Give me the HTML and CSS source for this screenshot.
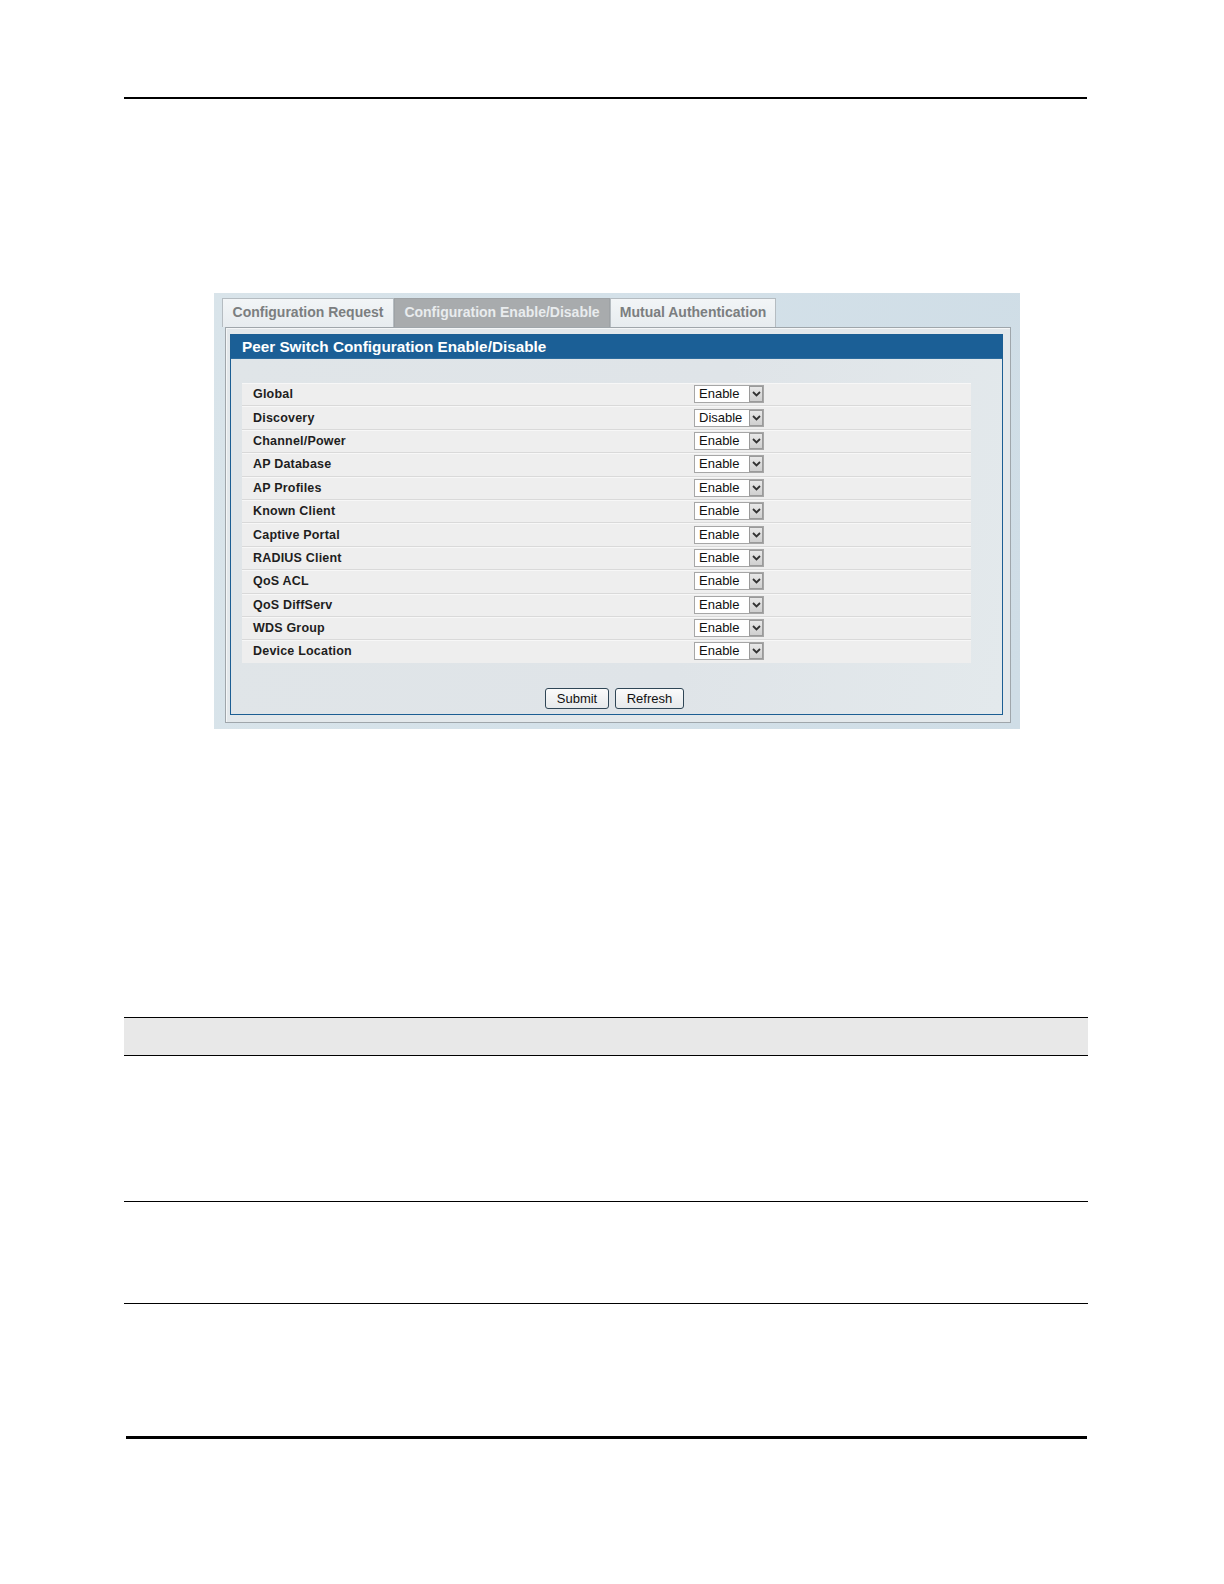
FILE: index.html
```html
<!DOCTYPE html>
<html>
<head>
<meta charset="utf-8">
<title>Peer Switch Configuration Enable/Disable</title>
<link rel="stylesheet" href="styles.css">
</head>
<body>
<div class="page">
  <div class="rule-top"></div>

  <div class="shot">
    <div class="tabs">
      <div class="tab tab-1">Configuration Request</div>
      <div class="tab tab-2 active">Configuration Enable/Disable</div>
      <div class="tab tab-3">Mutual Authentication</div>
    </div>
    <div class="panel">
      <div class="box">
        <div class="box-title">Peer Switch Configuration Enable/Disable</div>
        <div class="rows">
          <div class="row"><span class="label">Global</span><span class="sel"><span class="sel-text">Enable</span><span class="sel-btn"><svg width="9" height="6" viewBox="0 0 9 6"><path d="M1 1 L4.5 4.5 L8 1" fill="none" stroke="#333" stroke-width="1.8"/></svg></span></span></div>
          <div class="row"><span class="label">Discovery</span><span class="sel"><span class="sel-text">Disable</span><span class="sel-btn"><svg width="9" height="6" viewBox="0 0 9 6"><path d="M1 1 L4.5 4.5 L8 1" fill="none" stroke="#333" stroke-width="1.8"/></svg></span></span></div>
          <div class="row"><span class="label">Channel/Power</span><span class="sel"><span class="sel-text">Enable</span><span class="sel-btn"><svg width="9" height="6" viewBox="0 0 9 6"><path d="M1 1 L4.5 4.5 L8 1" fill="none" stroke="#333" stroke-width="1.8"/></svg></span></span></div>
          <div class="row"><span class="label">AP Database</span><span class="sel"><span class="sel-text">Enable</span><span class="sel-btn"><svg width="9" height="6" viewBox="0 0 9 6"><path d="M1 1 L4.5 4.5 L8 1" fill="none" stroke="#333" stroke-width="1.8"/></svg></span></span></div>
          <div class="row"><span class="label">AP Profiles</span><span class="sel"><span class="sel-text">Enable</span><span class="sel-btn"><svg width="9" height="6" viewBox="0 0 9 6"><path d="M1 1 L4.5 4.5 L8 1" fill="none" stroke="#333" stroke-width="1.8"/></svg></span></span></div>
          <div class="row"><span class="label">Known Client</span><span class="sel"><span class="sel-text">Enable</span><span class="sel-btn"><svg width="9" height="6" viewBox="0 0 9 6"><path d="M1 1 L4.5 4.5 L8 1" fill="none" stroke="#333" stroke-width="1.8"/></svg></span></span></div>
          <div class="row"><span class="label">Captive Portal</span><span class="sel"><span class="sel-text">Enable</span><span class="sel-btn"><svg width="9" height="6" viewBox="0 0 9 6"><path d="M1 1 L4.5 4.5 L8 1" fill="none" stroke="#333" stroke-width="1.8"/></svg></span></span></div>
          <div class="row"><span class="label">RADIUS Client</span><span class="sel"><span class="sel-text">Enable</span><span class="sel-btn"><svg width="9" height="6" viewBox="0 0 9 6"><path d="M1 1 L4.5 4.5 L8 1" fill="none" stroke="#333" stroke-width="1.8"/></svg></span></span></div>
          <div class="row"><span class="label">QoS ACL</span><span class="sel"><span class="sel-text">Enable</span><span class="sel-btn"><svg width="9" height="6" viewBox="0 0 9 6"><path d="M1 1 L4.5 4.5 L8 1" fill="none" stroke="#333" stroke-width="1.8"/></svg></span></span></div>
          <div class="row"><span class="label">QoS DiffServ</span><span class="sel"><span class="sel-text">Enable</span><span class="sel-btn"><svg width="9" height="6" viewBox="0 0 9 6"><path d="M1 1 L4.5 4.5 L8 1" fill="none" stroke="#333" stroke-width="1.8"/></svg></span></span></div>
          <div class="row"><span class="label">WDS Group</span><span class="sel"><span class="sel-text">Enable</span><span class="sel-btn"><svg width="9" height="6" viewBox="0 0 9 6"><path d="M1 1 L4.5 4.5 L8 1" fill="none" stroke="#333" stroke-width="1.8"/></svg></span></span></div>
          <div class="row"><span class="label">Device Location</span><span class="sel"><span class="sel-text">Enable</span><span class="sel-btn"><svg width="9" height="6" viewBox="0 0 9 6"><path d="M1 1 L4.5 4.5 L8 1" fill="none" stroke="#333" stroke-width="1.8"/></svg></span></span></div>
        </div>
        <div class="buttons">
          <span class="btn btn-submit">Submit</span>
          <span class="btn btn-refresh">Refresh</span>
        </div>
      </div>
    </div>
  </div>

  <div class="table">
    <div class="table-head"></div>
    <div class="table-row row-a"></div>
    <div class="table-row row-b"></div>
  </div>

  <div class="rule-bottom"></div>
</div>
</body>
</html>
```

FILE: styles.css
```css
html, body {
  margin: 0;
  padding: 0;
  background: #ffffff;
}

body {
  font-family: "Liberation Sans", Arial, sans-serif;
}

.page {
  width: 1224px;
  height: 1584px;
  position: relative;
  overflow: hidden;
}

.rule-top {
  margin: 97px 0 0 124px;
  width: 963px;
  height: 2px;
  background: #000;
}

.shot {
  margin: 194px 0 0 214px;
  width: 806px;
  height: 436px;
  box-sizing: border-box;
  padding: 5px 0 0 8px;
  background: linear-gradient(100deg, #d9e4ea 0%, #d4e1e9 45%, #cfdde6 100%);
}

.tabs {
  display: flex;
  height: 29px;
  align-items: stretch;
}

.tab {
  box-sizing: border-box;
  font-size: 14px;
  font-weight: bold;
  line-height: 27px;
  text-align: center;
  color: #7b7e80;
  background: linear-gradient(#f2f5f7, #e7ecef);
  border: 1px solid #b5bcc1;
  border-bottom: none;
}

.tab-1 { width: 172px; }
.tab-2 { width: 216px; }
.tab-3 { width: 166px; }

.tab.active {
  background: #a8abad;
  color: #e9ecee;
  border-color: #9ea2a5;
}

.panel {
  margin-left: 3px;
  width: 786px;
  height: 396px;
  box-sizing: border-box;
  border: 1px solid #9fa6ab;
  box-shadow: inset 1px 1px 0 #f4f6f7;
  padding: 6px 7px 0 4px;
  background: #e3e8eb;
}

.box {
  width: 773px;
  height: 381px;
  box-sizing: border-box;
  border: 1px solid #1c5e93;
  background: linear-gradient(100deg, #e0e5e8 0%, #dfe4e8 60%, #e3e9ec 100%);
}

.box-title {
  height: 23px;
  background: #1b5f96;
  color: #ffffff;
  font-size: 15.3px;
  font-weight: bold;
  line-height: 23px;
  padding-left: 11px;
  border-bottom: 1px solid #2d6c9e;
}

.rows {
  margin: 24px 0 0 11px;
  width: 729px;
}

.row {
  display: flex;
  align-items: center;
  height: 22.4px;
  background: #eeeeee;
  border-bottom: 1px solid #d9d9d9;
  box-shadow: inset 0 1px 0 #f7f7f7;
}

.row:last-child {
  border-bottom: none;
}

.label {
  width: 441px;
  padding-left: 11px;
  font-size: 12.5px;
  font-weight: bold;
  color: #1e1e1e;
  letter-spacing: 0.2px;
}

.sel {
  display: flex;
  align-items: stretch;
  height: 18px;
  width: 70px;
  box-sizing: border-box;
  border: 1px solid #a6a6a6;
  background: #fff;
}

.sel-text {
  flex: 1;
  font-size: 13px;
  line-height: 16px;
  padding-left: 4px;
  color: #111;
}

.sel-btn {
  width: 14px;
  box-sizing: border-box;
  border: 1px solid #9a9a9a;
  margin: 0px;
  background: linear-gradient(#e8e8e8, #cfcfcf);
  display: flex;
  align-items: center;
  justify-content: center;
}

.buttons {
  display: flex;
  justify-content: center;
  gap: 6px;
  margin-top: 25px;
  padding-right: 4px;
}

.btn {
  box-sizing: border-box;
  height: 21px;
  border: 1px solid #2f4656;
  border-radius: 3px;
  background: linear-gradient(#fbfbfb, #e6e9eb);
  font-size: 13px;
  line-height: 19px;
  text-align: center;
  color: #111;
}

.btn-submit { width: 64px; }
.btn-refresh { width: 69px; }

.table {
  margin: 288px 0 0 124px;
  width: 964px;
}

.table-head {
  height: 37px;
  background: #e8e8e8;
  border-top: 1.5px solid #000;
  border-bottom: 1.5px solid #000;
}

.row-a {
  height: 145px;
  border-bottom: 1.5px solid #000;
}

.row-b {
  height: 101px;
  border-bottom: 1.5px solid #000;
}

.rule-bottom {
  margin: 132px 0 0 126px;
  width: 961px;
  height: 3px;
  background: #000;
}
```
